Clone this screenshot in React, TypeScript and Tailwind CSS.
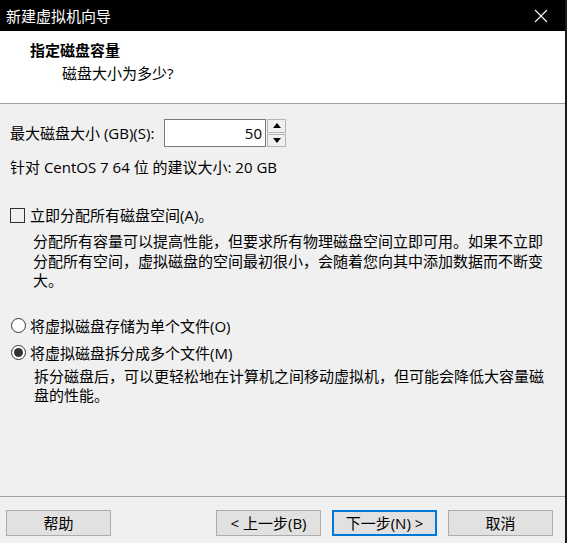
import React from "react";

const font = { fontFamily: '"Open Sans", "Noto Sans CJK SC", sans-serif' };

function WinButton({ label, primary = false, className = "" }: { label: string; primary?: boolean; className?: string }) {
  return (
    <button
      className={
        "h-[26px] w-[105px] bg-[#e1e1e1] text-[15px] leading-none text-black " +
        (primary ? "border-2 border-[#0078d7]" : "border border-[#adadad]") +
        " " +
        className
      }
    >
      {label}
    </button>
  );
}

function Lines({ lines, className = "" }: { lines: string[]; className?: string }) {
  return (
    <div className={"leading-[19.5px] " + className}>
      {lines.map((l) => (
        <div key={l} className="whitespace-nowrap">
          {l}
        </div>
      ))}
    </div>
  );
}

export default function App() {
  return (
    <div
      style={font}
      className="flex h-[543px] w-[567px] flex-col border-r-2 border-[#1a1a1a] bg-[#f0f0f0] text-[15px] leading-[20px] text-black"
    >
      {/* title bar */}
      <div className="flex h-[31px] shrink-0 items-center justify-between bg-black pl-[6px] pr-[17px] text-white">
        <span className="text-[15px]">新建虚拟机向导</span>
        <svg width="14" height="14" viewBox="0 0 14 14">
          <path d="M1 1 L13 13 M13 1 L1 13" stroke="white" strokeWidth="1.1" />
        </svg>
      </div>

      {/* header */}
      <div className="h-[73px] shrink-0 border-b border-[#a0a0a0] bg-white pt-[9px]">
        <div className="pl-[30px] font-bold">指定磁盘容量</div>
        <div className="mt-[3px] pl-[62px]">磁盘大小为多少?</div>
      </div>

      {/* body */}
      <div className="flex flex-1 flex-col pl-[10px] pt-[15px]">
        <div className="flex h-[28px] items-center">
          <span className="w-[154px] whitespace-nowrap">最大磁盘大小 (GB)(S):</span>
          <div className="flex h-[28px] w-[102px] items-center justify-end border border-[#7a7a7a] bg-white pr-[3px]">
            50
          </div>
          <div className="ml-px flex h-[28px] w-[19px] flex-col gap-px">
            <div className="flex flex-1 items-center justify-center border border-[#b5b5b5] bg-[#f0f0f0]">
              <svg width="8" height="5" viewBox="0 0 8 5">
                <path d="M0 5 L4 0 L8 5 Z" fill="black" />
              </svg>
            </div>
            <div className="flex flex-1 items-center justify-center border border-[#b5b5b5] bg-[#f0f0f0]">
              <svg width="8" height="5" viewBox="0 0 8 5">
                <path d="M0 0 L8 0 L4 5 Z" fill="black" />
              </svg>
            </div>
          </div>
        </div>

        <div className="mt-[10px]">针对 CentOS 7 64 位 的建议大小: 20 GB</div>

        <div className="mt-[28px] flex items-center">
          <span className="h-[15px] w-[15px] border border-[#333]" />
          <span className="ml-[5px]">立即分配所有磁盘空间(A)。</span>
        </div>
        <Lines
          className="mt-[7px] pl-[23px]"
          lines={[
            "分配所有容量可以提高性能，但要求所有物理磁盘空间立即可用。如果不立即",
            "分配所有空间，虚拟磁盘的空间最初很小，会随着您向其中添加数据而不断变",
            "大。",
          ]}
        />

        <div className="mt-[25px] flex items-center">
          <span className="ml-px h-[15px] w-[15px] rounded-full border border-[#333] bg-white" />
          <span className="ml-[4px]">将虚拟磁盘存储为单个文件(O)</span>
        </div>
        <div className="mt-[7px] flex items-center">
          <span className="ml-px flex h-[15px] w-[15px] items-center justify-center rounded-full border border-[#333] bg-white">
            <span className="h-[9px] w-[9px] rounded-full bg-[#333]" />
          </span>
          <span className="ml-[4px]">将虚拟磁盘拆分成多个文件(M)</span>
        </div>
        <Lines
          className="mt-[4px] pl-[24px]"
          lines={[
            "拆分磁盘后，可以更轻松地在计算机之间移动虚拟机，但可能会降低大容量磁",
            "盘的性能。",
          ]}
        />
      </div>

      {/* footer */}
      <div className="flex h-[47px] shrink-0 items-start border-t border-[#a0a0a0] pl-[6px] pt-[13px]">
        <WinButton label="帮助" />
        <WinButton label="< 上一步(B)" className="ml-[105px]" />
        <WinButton label="下一步(N) >" primary className="ml-[11px]" />
        <WinButton label="取消" className="ml-[11px]" />
      </div>
    </div>
  );
}
